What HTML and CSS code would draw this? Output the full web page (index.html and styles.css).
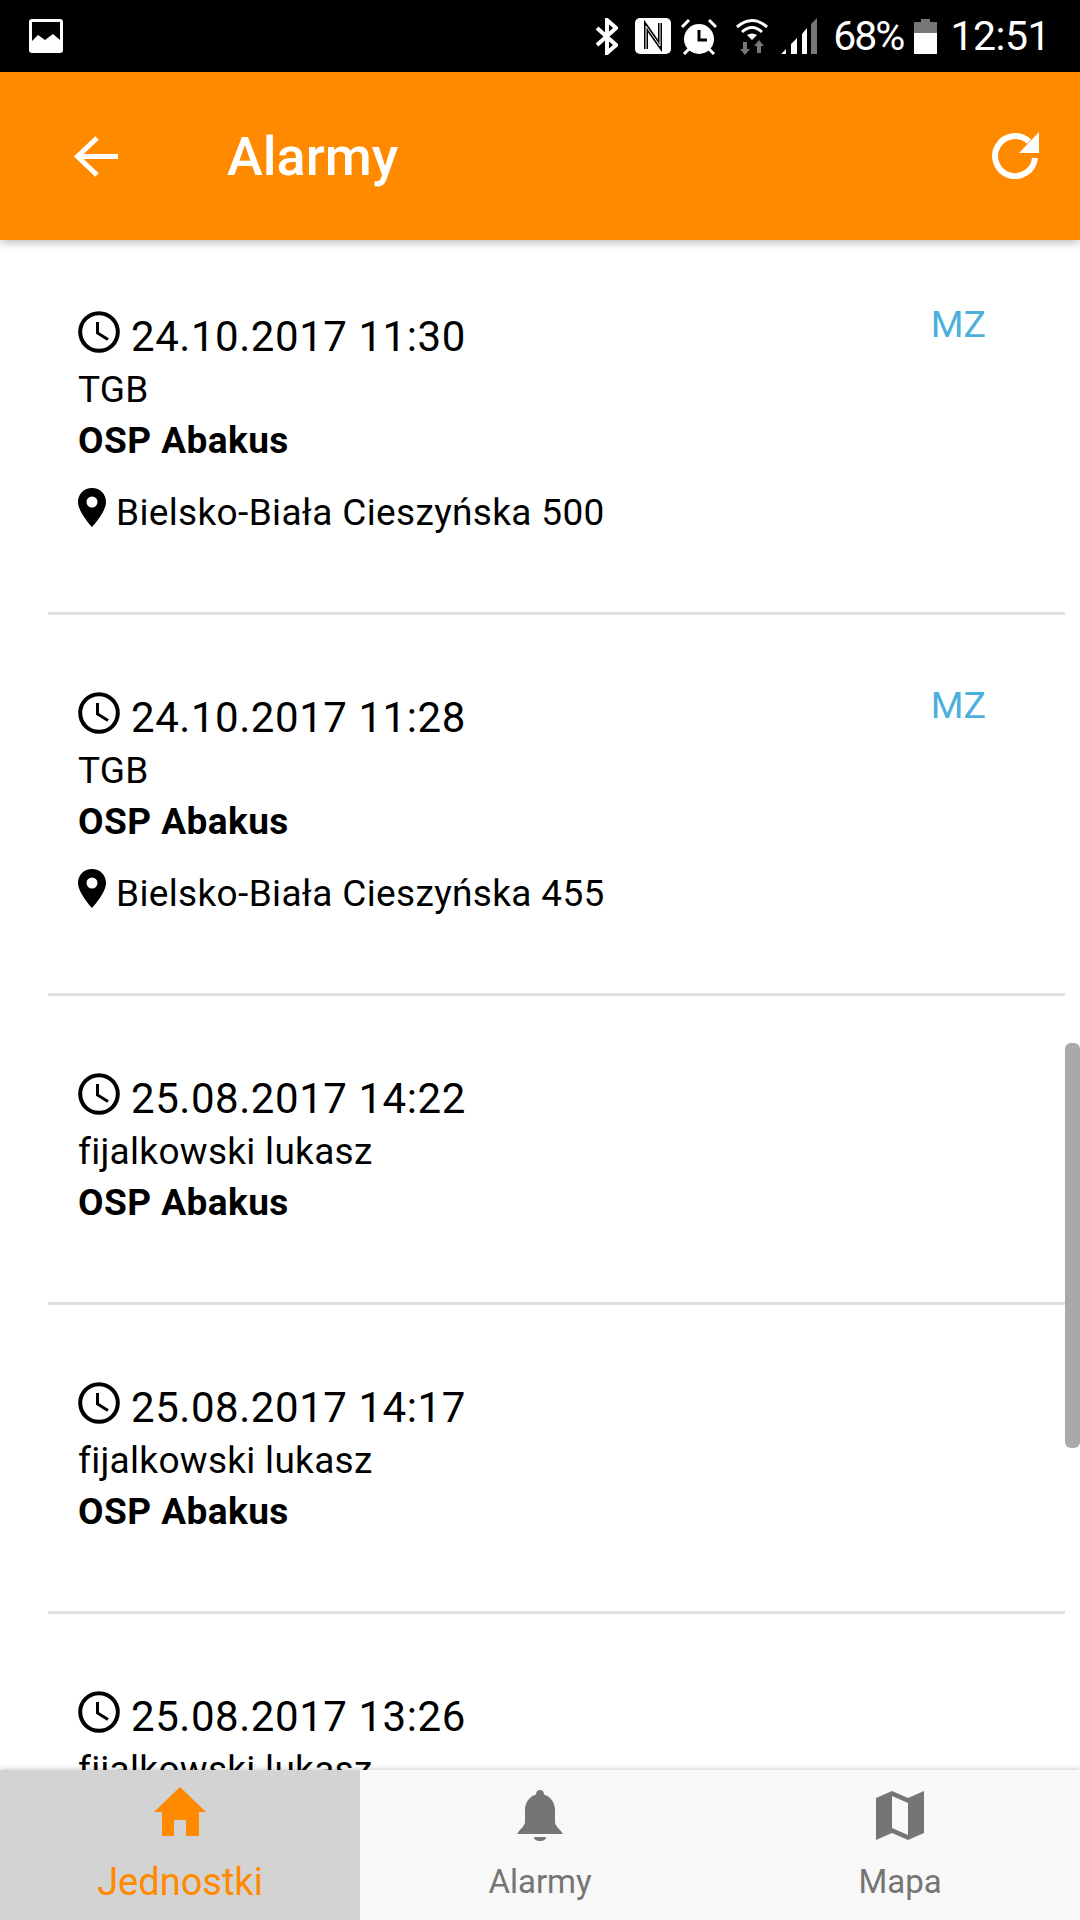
FILE: index.html
```html
<!DOCTYPE html>
<html lang="pl">
<head>
  <meta charset="UTF-8" />
  <meta name="viewport" content="width=device-width, initial-scale=1.0"/>
  <title>Alarmy</title>
  <link rel="stylesheet" href="styles.css">
</head>
<body>

  <svg width="0" height="0" class="defs">
    <symbol id="clock" viewBox="0 0 42 42">
      <circle cx="21" cy="21" r="18.8" fill="none" stroke="#000" stroke-width="4"/>
      <path d="M19.5 11V22L30 28.5" fill="none" stroke="#000" stroke-width="3"/>
    </symbol>
    <symbol id="pin" viewBox="0 0 28 39">
      <path fill-rule="evenodd" d="M14 0C6 0 0 6 0 14C0 24 14 39 14 39S28 24 28 14C28 6 22 0 14 0ZM14 8.500A5.500 5.500 0 1 1 14 19.500A5.500 5.500 0 1 1 14 8.500Z"/>
    </symbol>
  </svg>

  <!-- Status bar -->
  <div class="statusbar">
    <svg class="st-image" width="34" height="34" viewBox="0 0 34 34">
      <rect width="34" height="34" rx="3" fill="#fff"/>
      <path d="M3 3H31V21L24 15L16 21L9 16L3 22Z" fill="#000"/>
    </svg>
    <div class="status-right">
      <svg class="st-bt" width="23" height="37" viewBox="0 0 23 37">
        <path d="M2 10L21 27L12 35V2L21 10L2 27" fill="none" stroke="#fff" stroke-width="4"/>
      </svg>
      <svg class="st-nfc" width="36" height="36" viewBox="0 0 36 36">
        <rect width="36" height="36" rx="5" fill="#fff"/>
        <path d="M11 31V8L25 28V5" fill="none" stroke="#000" stroke-width="4"/>
        <path d="M11 31V8L25 28V5" fill="none" stroke="#fff" stroke-width="1"/>
      </svg>
      <svg class="st-alarm" width="36" height="37" viewBox="0 0 36 37">
        <circle cx="18" cy="21" r="15" fill="#fff"/>
        <path d="M18 12V22H26" fill="none" stroke="#000" stroke-width="3"/>
        <path d="M1 9L8 2M35 9L28 2M3 36L8 31M33 36L28 31" stroke="#fff" stroke-width="3" fill="none"/>
      </svg>
      <svg class="st-wifi" width="32" height="37" viewBox="0 0 32 37">
        <path d="M1 9Q16 -4 31 9M6 14Q16 5 26 14" fill="none" stroke="#fff" stroke-width="3"/>
        <path d="M11 17Q16 14 21 17L16 22Z" fill="#fff"/>
        <path d="M7 24H11V31H14L9 37L4 31H7ZM21 35H25V28H28L23 22L18 28H21Z" fill="#777"/>
      </svg>
      <svg class="st-signal" width="36" height="36" viewBox="0 0 36 36">
        <path d="M0 36L5 31V36ZM10 36V26L16 20V36ZM21 36V16L26 10V36Z" fill="#fff"/>
        <path d="M30 36V6L36 0V36Z" fill="#777"/>
      </svg>
      <span class="st-pct">68%</span>
      <svg class="st-batt" width="23" height="35" viewBox="0 0 23 35">
        <path d="M7 0H16V3H23V14H0V3H7Z" fill="#777"/>
        <rect y="14" width="23" height="21" fill="#fff"/>
      </svg>
      <span class="st-time">12:51</span>
    </div>
  </div>

  <!-- App bar -->
  <div class="appbar">
    <svg class="back" width="45" height="43" viewBox="0 0 45 43">
      <path d="M45 21.500H5M24 3L4.500 21.500L24 40" fill="none" stroke="#fff" stroke-width="5"/>
    </svg>
    <h1>Alarmy</h1>
    <svg class="refresh" width="47" height="47" viewBox="0 0 47 47">
      <path d="M37 9.700A20 20 0 1 0 43 26" fill="none" stroke="#fff" stroke-width="6"/>
      <path d="M47 0V21H27Z" fill="#fff"/>
    </svg>
  </div>

  <!-- Alarm list -->
  <div class="list">
    <div class="item">
      <div class="item-top">
        <div class="date"><svg class="ic-clock"><use href="#clock"/></svg>24.10.2017 11:30</div>
        <div class="tag">MZ</div>
      </div>
      <div class="name">TGB</div>
      <div class="org">OSP Abakus</div>
      <div class="place"><svg class="ic-pin"><use href="#pin"/></svg>Bielsko-Biała Cieszyńska 500</div>
    </div>
    <div class="item">
      <div class="item-top">
        <div class="date"><svg class="ic-clock"><use href="#clock"/></svg>24.10.2017 11:28</div>
        <div class="tag">MZ</div>
      </div>
      <div class="name">TGB</div>
      <div class="org">OSP Abakus</div>
      <div class="place"><svg class="ic-pin"><use href="#pin"/></svg>Bielsko-Biała Cieszyńska 455</div>
    </div>
    <div class="item">
      <div class="item-top">
        <div class="date"><svg class="ic-clock"><use href="#clock"/></svg>25.08.2017 14:22</div>
      </div>
      <div class="name">fijalkowski lukasz</div>
      <div class="org">OSP Abakus</div>
    </div>
    <div class="item">
      <div class="item-top">
        <div class="date"><svg class="ic-clock"><use href="#clock"/></svg>25.08.2017 14:17</div>
      </div>
      <div class="name">fijalkowski lukasz</div>
      <div class="org">OSP Abakus</div>
    </div>
    <div class="item">
      <div class="item-top">
        <div class="date"><svg class="ic-clock"><use href="#clock"/></svg>25.08.2017 13:26</div>
      </div>
      <div class="name">fijalkowski lukasz</div>
    </div>
    <div class="scrollbar"></div>
  </div>

  <!-- Bottom tabs -->
  <div class="tabs">
    <div class="tab active">
      <div class="tab-icon">
        <svg width="52" height="49" viewBox="0 0 52 49">
          <path d="M26 0L52 25H45V49H32V33H20V49H8V25H0Z"/>
        </svg>
      </div>
      <span>Jednostki</span>
    </div>
    <div class="tab">
      <div class="tab-icon">
        <svg width="46" height="51" viewBox="0 0 46 51">
          <path d="M23 0C25.500 0 27 2 27 4.500C34 6.500 38 13 38 20V32C38 36 43 39 46 44H0C3 39 8 36 8 32V20C8 13 12 6.500 19 4.500C19 2 20.500 0 23 0Z"/>
          <path d="M17 47H29C29 50 26 51 23 51S17 50 17 47Z"/>
        </svg>
      </div>
      <span>Alarmy</span>
    </div>
    <div class="tab">
      <div class="tab-icon">
        <svg width="48" height="49" viewBox="0 0 48 49">
          <path fill-rule="evenodd" d="M0 7L16 0L32 7L48 0V42L32 49L16 42L0 49ZM16 5V37L32 44V12Z"/>
        </svg>
      </div>
      <span>Mapa</span>
    </div>
  </div>

</body>
</html>
```

FILE: styles.css
```css
* {
  box-sizing: border-box;
  font-family: 'Roboto', sans-serif;
}
body {
  margin: 0;
  width: 1080px;
  height: 1920px;
  overflow: hidden;
  display: flex;
  flex-direction: column;
  background: white;
  color: black;
}
svg {
  display: block;
  flex-shrink: 0;
}
.defs {
  position: absolute;
}

/* Status bar */
.statusbar {
  height: 72px;
  flex-shrink: 0;
  background: black;
  color: white;
  display: flex;
  align-items: center;
  justify-content: space-between;
  padding: 0 30px 0 29px;
}
.status-right {
  display: flex;
  align-items: center;
}
.st-nfc { margin-left: 17px; }
.st-alarm { margin-left: 10px; }
.st-wifi { margin-left: 19px; }
.st-signal { margin-left: 13px; }
.st-batt { margin-left: 11px; }
.st-pct, .st-time {
  font-size: 41px;
  line-height: 50px;
}
.st-pct {
  margin-left: 16px;
  letter-spacing: -2px;
}
.st-time {
  margin-left: 13px;
  letter-spacing: -0.5px;
}

/* App bar */
.appbar {
  height: 168px;
  flex-shrink: 0;
  background: #ff8a00;
  display: flex;
  align-items: center;
  padding: 0 41px 0 73px;
  position: relative;
  z-index: 2;
  box-shadow: 0 2px 10px rgba(0,0,0,0.3);
}
.appbar h1 {
  flex: 1;
  margin: 0 0 0 109px;
  color: white;
  font-size: 54px;
  font-weight: 500;
}
.refresh {
  margin-top: -2px;
}

/* List */
.list {
  flex: 1;
  margin-top: -6px;
  position: relative;
  overflow: hidden;
}
.item {
  margin-left: 48px;
  margin-right: 15px;
  padding: 75px 79px 74px 30px;
  border-bottom: 3px solid #e0e0e0;
}
.item-top {
  display: flex;
  justify-content: space-between;
  align-items: flex-start;
  height: 55px;
}
.date {
  display: flex;
  align-items: flex-start;
  font-size: 42px;
  letter-spacing: 0.55px;
  line-height: 55px;
}
.ic-clock {
  width: 42px;
  height: 42px;
  margin: 2px 11px 0 0;
}
.tag {
  margin-top: -5px;
  font-size: 37.5px;
  line-height: 40px;
  color: #4db0dc;
}
.name, .org {
  font-size: 37px;
  letter-spacing: 0.3px;
  line-height: 51px;
}
.org {
  font-weight: 700;
  letter-spacing: 0.45px;
}
.place {
  display: flex;
  align-items: flex-start;
  margin-top: 22px;
  font-size: 37px;
  letter-spacing: 0.35px;
  line-height: 50px;
}
.ic-pin {
  width: 28px;
  height: 39px;
  margin-right: 10px;
}
.scrollbar {
  position: absolute;
  top: 809px;
  right: 0;
  width: 15px;
  height: 405px;
  border-radius: 6px;
  background: #a9a9a9;
}

/* Tabs */
.tabs {
  height: 150px;
  flex-shrink: 0;
  background: #f8f8f8;
  display: grid;
  grid-template-columns: repeat(3, 360px);
  position: relative;
  z-index: 2;
  box-shadow: 0 -1px 5px rgba(0,0,0,0.2);
}
.tab {
  display: flex;
  flex-direction: column;
  align-items: center;
  padding-top: 15px;
  color: #757575;
  fill: #757575;
  font-size: 33px;
  line-height: 40px;
}
.tab span {
  margin-top: 17px;
}
.tab-icon {
  height: 60px;
  display: flex;
  align-items: center;
}
.tab.active {
  background: #d3d3d3;
  color: #ff8a00;
  fill: #ff8a00;
  font-size: 38px;
}
.tab.active .tab-icon {
  align-items: flex-start;
  padding-top: 2px;
}
```
